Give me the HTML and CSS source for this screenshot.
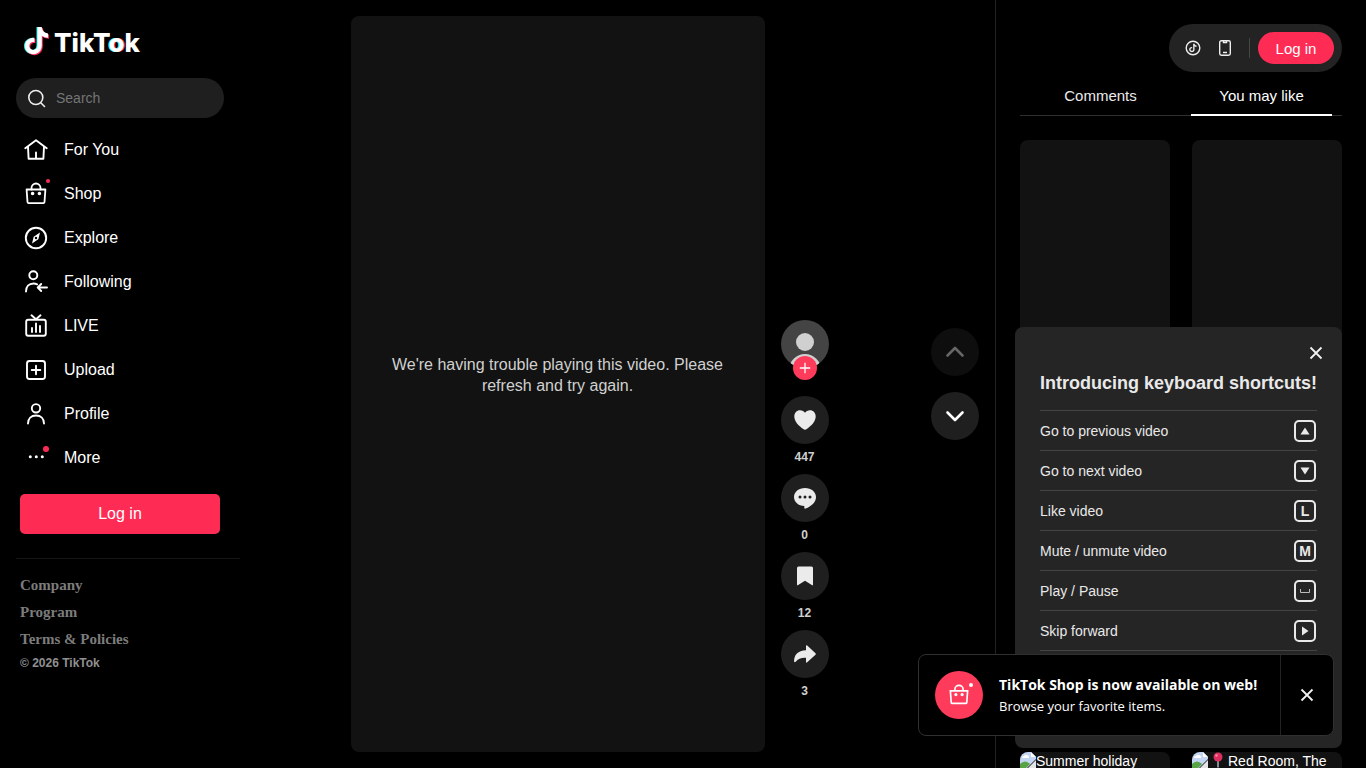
FILE: index.html
```html
<!DOCTYPE html>
<html lang="en">
<head>
    <meta charset="UTF-8">
    <meta name="viewport" content="width=device-width, initial-scale=1.0">
    <title>TikTok</title>
    <link rel="stylesheet" href="styles.css">
</head>
<body>
    <!-- Shared icons -->
    <svg class="sprite" aria-hidden="true">
        <symbol id="bag" viewBox="0 0 24 24">
            <path d="M2.600 7.500h18.800l-.9 12.500q-.1 1.200-1.200 1.200H4.700q-1.100 0-1.200-1.200z"/>
            <path d="M7.500 7.500V6a4.500 4.500 0 0 1 9 0v1.500"/>
            <circle cx="8.600" cy="11.500" r=".9"/>
            <circle cx="15.400" cy="11.500" r=".9"/>
        </symbol>
        <symbol id="note" viewBox="0 0 24 28">
            <path d="M12.500 0h4.200c.4 3.600 2.600 6 6.300 6.400v4.300c-2.300 0-4.400-.7-6.200-2v9.800c0 5.200-3.800 8.700-8.400 8.700C3.600 27.200 0 23.500 0 19c0-5 4-8.700 9.400-8.300v4.500c-2.800-.5-5.100 1.200-5.100 3.800 0 2.200 1.700 3.900 4 3.900s4.200-1.600 4.200-4.400z"/>
        </symbol>
        <symbol id="close" viewBox="0 0 14 14">
            <path d="M1.500 1.500l11 11M12.500 1.500l-11 11"/>
        </symbol>
        <symbol id="broken" viewBox="0 0 16 16">
            <path fill="#c3d5f2" d="M0 0h11l5 5v2L7 16H0z"/>
            <path fill="#fff" d="M11 0v5h5zM2 6q0-2 2-2 1-2 3-1 2 0 2 3z"/>
            <path fill="#58a445" d="M0 12q5-5 10 0l-4 4H0z"/>
            <path fill="#e4e4e4" d="M16 8v8H8z"/>
        </symbol>
    </svg>

    <div class="app">
        <nav class="sidebar">
            <a class="logo" href="#">
                <svg class="logo-note" viewBox="-1 -1 27 31">
                    <use href="#note" x="0" y="0" width="24" height="28" fill="#25f4ee"/>
                    <use href="#note" x="2" y="1" width="24" height="28" fill="#fe2c55"/>
                    <use href="#note" x="1" y="0" width="24" height="28" fill="#fff"/>
                </svg>
                <span>TikT<span class="logo-o">o</span>k</span>
            </a>

            <label class="search">
                <svg width="20" height="20" viewBox="0 0 20 20"><circle cx="8.800" cy="9.500" r="7"/><path d="M14 15l3.500 3.500"/></svg>
                <input type="search" placeholder="Search" aria-label="Search">
            </label>

            <ul class="menu">
                <li><a href="#">
                    <svg class="icon" viewBox="0 0 24 24"><path d="M1.300 10.300L12 2.200l10.700 8.100M4 8.800l.6 12h14.800l.6-12M12 14.500v6"/></svg>
                    For You
                </a></li>
                <li><a href="#">
                    <svg class="icon icon-bag"><use href="#bag"/></svg>
                    Shop
                    <i class="dot dot-small"></i>
                </a></li>
                <li><a href="#">
                    <svg class="icon" viewBox="0 0 24 24"><circle cx="12" cy="12" r="10.200"/><path class="needle" d="M16 6.500l-6.300 4.200L8 17.500l6.300-4.200z"/><circle class="hole" cx="12" cy="12" r="1.200"/></svg>
                    Explore
                </a></li>
                <li><a href="#">
                    <svg class="icon" viewBox="0 0 24 24"><circle cx="9.300" cy="5.300" r="4"/><path d="M2 21.500c0-4.800 2.800-8 7.500-8 1.400 0 2.600.3 3.600.8M23 17.500h-9M17.200 14l-3.500 3.500 3.500 3.500"/></svg>
                    Following
                </a></li>
                <li><a href="#">
                    <svg class="icon" viewBox="0 0 24 24"><rect x="2.200" y="5.700" width="19.600" height="16" rx="2"/><path d="M7.500 1.300l4.500 4 4.500-4M8 14v4M12 9.500V18M16 12v6"/></svg>
                    LIVE
                </a></li>
                <li><a href="#">
                    <svg class="icon" viewBox="0 0 24 24"><rect x="3" y="3" width="18" height="18" rx="2.500"/><path d="M12 7.700v8.600M7.700 12h8.600"/></svg>
                    Upload
                </a></li>
                <li><a href="#">
                    <svg class="icon" viewBox="0 0 24 24"><circle cx="12" cy="6.300" r="4.200"/><path d="M4 21.500c0-5 3.200-8 8-8s8 3 8 8"/></svg>
                    Profile
                </a></li>
                <li><a href="#">
                    <svg class="icon icon-fill" viewBox="0 0 24 24"><circle cx="6.300" cy="10.700" r="1.500"/><circle cx="12.300" cy="10.700" r="1.500"/><circle cx="18.300" cy="10.700" r="1.500"/></svg>
                    More
                    <i class="dot"></i>
                </a></li>
            </ul>

            <button class="login-wide">Log in</button>

            <div class="footer">
                <h4>Company</h4>
                <h4>Program</h4>
                <h4>Terms &amp; Policies</h4>
                <p>© 2026 TikTok</p>
            </div>
        </nav>

        <main class="feed">
            <div class="post">
                <div class="player">
                    <p>We're having trouble playing this video. Please refresh and try again.</p>
                </div>
                <div class="actions">
                    <div class="author">
                        <svg width="48" height="48" viewBox="0 0 48 48">
                            <clipPath id="round"><circle cx="24" cy="24" r="24"/></clipPath>
                            <g clip-path="url(#round)"><path fill="#444" d="M0 0h48v48H0z"/><circle cx="24" cy="22" r="9" fill="#d0d0d0"/><circle cx="24" cy="50" r="16" fill="#d0d0d0"/></g>
                        </svg>
                        <button class="follow" aria-label="Follow"><svg width="12" height="12" viewBox="0 0 12 12"><path d="M6 .8v10.400M.8 6h10.400"/></svg></button>
                    </div>
                    <button class="action">
                        <span class="circle"><svg width="24" height="24" viewBox="0 0 24 24"><path d="M7 2.300c2.300 0 3.900 1 5 2.500 1.100-1.500 2.700-2.500 5-2.500 3.300 0 5.700 2.700 5.700 6.200 0 5-4.300 9.200-8.900 12.500q-1.800 1.300-3.600 0C5.600 17.700 1.300 13.500 1.300 8.500 1.300 5 3.700 2.300 7 2.300z"/></svg></span>
                        <strong>447</strong>
                    </button>
                    <button class="action">
                        <span class="circle"><svg width="24" height="24" viewBox="0 0 24 24"><path d="M12 2c6.200 0 11 3.900 11 9 0 5.500-4.800 9.300-10.300 11.600-.8.300-1.400 0-1.400-.8V20C5.400 19.800 1 16 1 11c0-5.100 4.800-9 11-9z"/><g fill="#1f1f1f"><circle cx="7" cy="11" r="1.500"/><circle cx="12" cy="11" r="1.500"/><circle cx="17" cy="11" r="1.500"/></g></svg></span>
                        <strong>0</strong>
                    </button>
                    <button class="action">
                        <span class="circle"><svg width="24" height="24" viewBox="0 0 24 24"><path d="M5.500 2.500h13q1.500 0 1.500 1.500v16.500q0 1.300-1.200.6L12 16.800l-6.800 4.300Q4 21.800 4 20.500V4q0-1.500 1.500-1.500z"/></svg></span>
                        <strong>12</strong>
                    </button>
                    <button class="action">
                        <span class="circle"><svg width="24" height="24" viewBox="0 0 24 24"><path d="M13 4.200q0-1.600 1.200-.6l8.300 7.600q.8.800 0 1.600l-8.300 7.500q-1.200 1-1.200-.6v-4c-4.800-.2-8 .8-10.300 4-.6.800-1.600.6-1.600-.5C1 13 4.800 8.500 13 8.200z"/></svg></span>
                        <strong>3</strong>
                    </button>
                </div>
            </div>
            <div class="arrows">
                <button class="circle" aria-label="Previous video" disabled><svg width="24" height="24" viewBox="0 0 24 24"><path d="M4.500 15.500L12 8l7.500 7.500"/></svg></button>
                <button class="circle" aria-label="Next video"><svg width="24" height="24" viewBox="0 0 24 24"><path d="M4.500 8.500L12 16l7.500-7.500"/></svg></button>
            </div>
        </main>

        <aside class="side">
            <div class="topbar">
                <button class="tool" aria-label="Coins"><svg width="16" height="16" viewBox="0 0 16 16"><circle cx="8" cy="8" r="6.800"/><use href="#note" x="4" y="3.500" width="8" height="9"/></svg></button>
                <button class="tool" aria-label="Get app"><svg width="16" height="16" viewBox="0 0 16 16"><rect x="2.700" y=".8" width="10.600" height="14.400" rx="1.600"/><path d="M6.500 1v1.500h3V1M6 12.500h4"/></svg></button>
                <span class="separator"></span>
                <button class="login-pill">Log in</button>
            </div>
            <div class="tabs">
                <button>Comments</button>
                <button class="active">You may like</button>
            </div>
            <div class="videos">
                <a class="video" href="#" aria-label="Video"></a>
                <a class="video" href="#" aria-label="Video"></a>
                <a class="video" href="#" aria-label="Video"></a>
                <a class="video" href="#" aria-label="Video"></a>
                <a class="video" href="#"><svg class="thumb" width="16" height="16"><use href="#broken"/></svg>Summer holiday</a>
                <a class="video" href="#"><svg class="thumb" width="16" height="16"><use href="#broken"/></svg>
                    <svg class="pin" width="10" height="16" viewBox="0 0 10 16"><path d="M5 8v7.500" stroke="#aab4bd" stroke-width="1.500"/><circle cx="5" cy="5" r="4.500" fill="#dd2e60"/><circle cx="3.500" cy="3.500" r="1.200" fill="#f58aa5"/></svg>
                    Red Room, The</a>
            </div>
        </aside>
    </div>

    <section class="shortcuts">
        <button class="close" aria-label="Close"><svg width="14" height="14"><use href="#close"/></svg></button>
        <h2>Introducing keyboard shortcuts!</h2>
        <ul>
            <li>Go to previous video <kbd><svg width="10" height="8" viewBox="0 0 10 8"><path d="M5 .5l4.500 7h-9z"/></svg></kbd></li>
            <li>Go to next video <kbd><svg width="10" height="8" viewBox="0 0 10 8"><path d="M5 7.500L.5 .5h9z"/></svg></kbd></li>
            <li>Like video <kbd>L</kbd></li>
            <li>Mute / unmute video <kbd>M</kbd></li>
            <li>Play / Pause <kbd><svg width="12" height="6" viewBox="0 0 12 6"><path class="space" d="M1.500 1v3.500h9V1"/></svg></kbd></li>
            <li>Skip forward <kbd><svg width="8" height="10" viewBox="0 0 8 10"><path d="M1 .5L7.500 5 1 9.500z"/></svg></kbd></li>
        </ul>
    </section>

    <div class="toast">
        <div class="toast-icon">
            <svg class="icon-bag" width="22" height="22"><use href="#bag"/></svg>
            <i class="dot"></i>
        </div>
        <div class="toast-text">
            <h3>TikTok Shop is now available on web!</h3>
            <p>Browse your favorite items.</p>
        </div>
        <button class="toast-close" aria-label="Close"><svg width="14" height="14"><use href="#close"/></svg></button>
    </div>
</body>
</html>
```

FILE: styles.css
```css
* {
    box-sizing: border-box;
}
body {
    margin: 0;
    overflow: hidden;
    background: #000;
    color: #fff;
    font-family: "Liberation Sans", Arial, sans-serif;
}
button {
    padding: 0;
    border: none;
    background: none;
    color: inherit;
    font-family: inherit;
    cursor: pointer;
}
a {
    color: inherit;
    text-decoration: none;
}
ul {
    list-style: none;
    margin: 0;
    padding: 0;
}
svg {
    display: block;
    flex-shrink: 0;
}
.sprite {
    position: absolute;
    width: 0;
    height: 0;
}
.app {
    display: flex;
    height: 100vh;
    overflow: hidden;
}

/* Sidebar */
.sidebar {
    width: 240px;
    flex-shrink: 0;
    padding: 24px 0 0 16px;
}
.logo {
    display: flex;
    align-items: center;
    gap: 4px;
    height: 38px;
    padding-left: 7px;
    font-family: Inter, sans-serif;
    font-size: 26px;
    font-weight: 800;
    line-height: 38px;
}
.logo-note {
    width: 27px;
    height: 31px;
    margin-bottom: 4px;
}
.logo-o {
    text-shadow: -1px 0 #25f4ee, 1px 0 #fe2c55;
}
.search {
    display: flex;
    align-items: center;
    gap: 9px;
    width: 208px;
    height: 40px;
    margin: 16px 0 10px;
    padding: 0 12px 0 11px;
    border-radius: 20px;
    background: #1f1f1f;
}
.search svg {
    fill: none;
    stroke: #eee;
    stroke-width: 1.6;
    stroke-linecap: round;
}
.search input {
    flex: 1;
    min-width: 0;
    padding: 0;
    border: none;
    outline: none;
    background: none;
    color: #fff;
    font-family: inherit;
    font-size: 14px;
}
.search input::placeholder {
    color: #757575;
}
.menu a {
    position: relative;
    display: flex;
    align-items: center;
    gap: 16px;
    height: 44px;
    padding-left: 8px;
    font-size: 16px;
}
.icon {
    width: 24px;
    height: 24px;
    fill: none;
    stroke: #fff;
    stroke-width: 1.9;
    stroke-linecap: round;
    stroke-linejoin: round;
}
.icon-bag {
    fill: none;
    stroke: #fff;
    stroke-width: 1.8;
}
.icon-fill,
.needle {
    fill: #fff;
    stroke: none;
}
.hole {
    fill: #000;
    stroke: none;
}
.dot {
    position: absolute;
    top: 10px;
    left: 27px;
    width: 6px;
    height: 6px;
    border-radius: 50%;
    background: #fe2c55;
}
.dot-small {
    top: 7px;
    left: 30px;
    width: 4px;
    height: 4px;
}
.login-wide {
    width: 200px;
    height: 40px;
    margin: 14px 4px 24px;
    border-radius: 5px;
    background: #fe2c55;
    font-size: 16px;
}
.footer {
    padding: 13px 4px;
    border-top: 1px solid #161616;
    color: #7c7c7c;
}
.footer h4 {
    margin: 0;
    font-family: "Liberation Serif", "Times New Roman", serif;
    font-size: 15px;
    line-height: 27px;
}
.footer p {
    margin: 0;
    color: #909090;
    font-size: 12px;
    font-weight: bold;
    line-height: 20px;
}

/* Feed */
.feed {
    flex: 1;
    display: flex;
    align-items: center;
    padding: 16px 16px 16px 8px;
}
.post {
    flex: 1;
    display: flex;
    justify-content: center;
    gap: 16px;
    height: 100%;
}
.player {
    display: flex;
    align-items: center;
    height: 100%;
    aspect-ratio: 9 / 16;
    padding: 0 32px;
    border-radius: 8px;
    background: #121212;
    color: #d0d0d0;
    font-size: 16px;
    line-height: 21px;
    text-align: center;
}
.player p {
    margin: 0;
    padding-bottom: 18px;
}
.actions {
    align-self: flex-end;
    display: flex;
    flex-direction: column;
    padding-bottom: 44px;
}
.author {
    position: relative;
    margin-bottom: 28px;
}
.follow {
    position: absolute;
    top: 36px;
    left: 12px;
    display: grid;
    place-items: center;
    width: 24px;
    height: 24px;
    border-radius: 50%;
    background: #ff3b5c;
}
.follow path {
    stroke: #fff;
    stroke-width: 1.3;
}
.action {
    color: #d0d0d0;
    font-size: 12px;
    line-height: 18px;
    text-align: center;
}
.action strong {
    display: block;
    padding: 4px 0 8px;
}
.circle {
    display: grid;
    place-items: center;
    width: 48px;
    height: 48px;
    border-radius: 50%;
    background: #1f1f1f;
}
.action svg {
    fill: #ebebeb;
}
.arrows {
    display: flex;
    flex-direction: column;
    gap: 16px;
}
.arrows path {
    fill: none;
    stroke: #fff;
    stroke-width: 2.6;
    stroke-linecap: round;
    stroke-linejoin: round;
}
.arrows button:disabled {
    background: #0e0e0e;
}
.arrows button:disabled path {
    stroke: #666;
}

/* Right column */
.side {
    width: 371px;
    flex-shrink: 0;
    padding: 24px;
    border-left: 1px solid #222;
}
.topbar {
    display: flex;
    align-items: center;
    width: fit-content;
    height: 48px;
    margin-left: auto;
    padding: 8px;
    border-radius: 24px;
    background: #232323;
}
.tool {
    display: grid;
    place-items: center;
    width: 32px;
    height: 32px;
}
.tool svg {
    fill: none;
    stroke: #eee;
    stroke-width: 1.4;
}
.tool use {
    fill: #eee;
    stroke: none;
}
.separator {
    width: 1px;
    height: 20px;
    margin: 0 8px;
    background: #464646;
}
.login-pill {
    width: 76px;
    height: 32px;
    border-radius: 16px;
    background: #fe2c55;
    font-size: 15px;
}
.tabs {
    display: flex;
    height: 44px;
    margin-bottom: 24px;
    padding-top: 4px;
    border-bottom: 1px solid #303030;
}
.tabs button {
    position: relative;
    flex: 1;
    color: #ebebeb;
    font-size: 15px;
}
.tabs .active {
    color: #fff;
}
.tabs .active::after {
    content: "";
    position: absolute;
    right: 10px;
    bottom: -1px;
    left: 10px;
    height: 2px;
    background: #fff;
}
.videos {
    display: grid;
    grid-template-columns: 1fr 1fr;
    grid-auto-rows: 282px;
    gap: 24px 22px;
}
.video {
    display: flex;
    align-items: flex-start;
    overflow: hidden;
    border-radius: 8px;
    background: #121212;
    font-size: 14px;
    line-height: 18px;
}
.pin {
    margin: 0 5px;
}

/* Keyboard shortcuts */
.shortcuts {
    position: fixed;
    right: 24px;
    bottom: 20px;
    width: 327px;
    padding: 19px 25px 97px;
    border-radius: 8px;
    background: #252525;
    color: #e9e9e9;
}
.close {
    display: block;
    margin: 0 -6px 0 auto;
}
.close svg,
.toast-close svg {
    stroke: #f1f1f1;
    stroke-width: 1.8;
}
.shortcuts h2 {
    margin: 12px 0 16px;
    font-size: 18px;
    line-height: 22px;
    white-space: nowrap;
}
.shortcuts li {
    display: flex;
    align-items: center;
    justify-content: space-between;
    height: 40px;
    padding-right: 1px;
    border-top: 1px solid #444;
    font-size: 14px;
}
.shortcuts li:last-child {
    height: 41px;
    border-bottom: 1px solid #444;
}
.shortcuts kbd {
    display: grid;
    place-items: center;
    width: 22px;
    height: 22px;
    border: 2px solid #e9e9e9;
    border-radius: 5px;
    font-family: inherit;
    font-size: 14px;
    font-weight: bold;
}
.shortcuts kbd svg {
    fill: #e9e9e9;
}
.shortcuts .space {
    fill: none;
    stroke: #bbb;
}

/* Shop notice */
.toast {
    position: fixed;
    right: 32px;
    bottom: 32px;
    display: flex;
    align-items: center;
    width: 416px;
    height: 82px;
    padding-left: 16px;
    border: 1px solid #303030;
    border-radius: 8px;
    background: #000;
    font-family: "Open Sans", "Noto Sans", sans-serif;
}
.toast-icon {
    position: relative;
    display: grid;
    place-items: center;
    width: 48px;
    height: 48px;
    margin-right: 16px;
    border-radius: 50%;
    background: #ff3b5c;
}
.toast-icon .dot {
    top: 12px;
    left: 34px;
    width: 4px;
    height: 4px;
    background: #fff;
}
.toast-text {
    flex: 1;
    white-space: nowrap;
}
.toast h3 {
    margin: 0;
    font-size: 14px;
    font-weight: 700;
    line-height: 22px;
}
.toast p {
    margin: 0;
    font-size: 13px;
    line-height: 20px;
}
.toast-close {
    display: grid;
    place-items: center;
    align-self: stretch;
    width: 53px;
    border-left: 1px solid #222;
}
```
